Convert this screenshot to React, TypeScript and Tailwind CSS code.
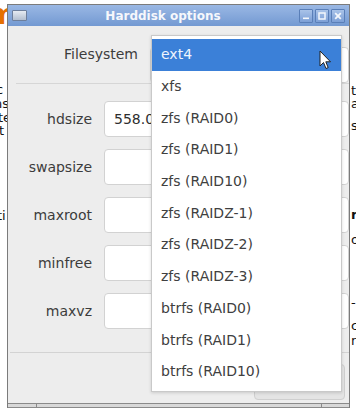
const fsOptions = [
  'ext4',
  'xfs',
  'zfs (RAID0)',
  'zfs (RAID1)',
  'zfs (RAID10)',
  'zfs (RAIDZ-1)',
  'zfs (RAIDZ-2)',
  'zfs (RAIDZ-3)',
  'btrfs (RAID0)',
  'btrfs (RAID1)',
  'btrfs (RAID10)',
]

const fields = [
  { label: 'hdsize', value: '558.0' },
  { label: 'swapsize', value: '' },
  { label: 'maxroot', value: '' },
  { label: 'minfree', value: '' },
  { label: 'maxvz', value: '' },
]

function TitleButton({ kind }: { kind: 'min' | 'max' | 'close' }) {
  return (
    <div className="flex h-[14px] w-[14px] items-center justify-center rounded-[1px] border border-[#5a7fb8] bg-gradient-to-b from-[#a9c3e8] to-[#7c9fd6]">
      <svg width="8" height="8" viewBox="0 0 8 8">
        {kind === 'min' && <rect x="1" y="5.5" width="6" height="1.6" fill="#f4f7fc" />}
        {kind === 'max' && <rect x="1" y="1" width="6" height="6" fill="none" stroke="#f4f7fc" strokeWidth="1.5" />}
        {kind === 'close' && (
          <path d="M1.2 1.2 L6.8 6.8 M6.8 1.2 L1.2 6.8" stroke="#f4f7fc" strokeWidth="1.8" />
        )}
      </svg>
    </div>
  )
}

export default function App() {
  return (
    <div
      className="relative h-[413px] w-[356px] overflow-hidden bg-white text-[#3c3c3c]"
      style={{ fontFamily: '"DejaVu Sans", "Liberation Sans", sans-serif' }}
    >
      <div className="flex h-full">
        {/* page behind, left */}
        <div className="relative h-full w-[7px] shrink-0 overflow-hidden text-[13px] leading-[13px] text-[#111]">
          <span className="absolute left-[-13px] top-[0px] block h-[30px] text-[28px] font-bold leading-[30px] text-[#e57000]">m</span>
          <div className="absolute left-[-4px] top-[83px]">c</div>
          <div className="absolute left-[-6px] top-[97px]">ns</div>
          <div className="absolute left-[-2px] top-[111px]">te</div>
          <div className="absolute left-[-1px] top-[124px]">t</div>
          <div className="absolute left-[-3px] top-[209px]">ti</div>
        </div>

        {/* dialog window */}
        <div className="mt-[4px] flex h-[404px] w-[343px] shrink-0 flex-col border-x border-t border-[#7b7b7b] bg-[#ededed]">
          <div className="relative flex h-[21px] shrink-0 items-center bg-gradient-to-b from-[#9ab8e4] to-[#7399d2] px-[4px]">
            <div className="h-[11px] w-[15px] rounded-[1px] border border-[#6d7f9c] bg-gradient-to-b from-[#e6ebf2] to-[#b3bfd0]" />
            <div className="flex-1 text-center text-[12px] font-bold text-[#f6f8fc]">Harddisk options</div>
            <div className="flex gap-[2px]">
              <TitleButton kind="min" />
              <TitleButton kind="max" />
              <TitleButton kind="close" />
            </div>
          </div>

          <div className="flex h-[57px] shrink-0 items-center">
            <div className="w-[131px] pr-[1px] text-right text-[14px]">Filesystem</div>
            <div className="ml-[11px] h-[36px] flex-1 self-end rounded-[4px] border border-[#cfcfcf] bg-white" />
          </div>
          <div className="ml-[8px] h-px shrink-0 bg-[#d6d6d6]" />

          <div className="flex flex-col gap-[12px] pt-[17px]">
            {fields.map((f) => (
              <div key={f.label} className="flex h-[36px] items-center">
                <div className="w-[84px] text-right text-[14px]">{f.label}</div>
                <div className="ml-[12px] flex h-full flex-1 items-center rounded-[4px] border border-[#d2d2d2] bg-white pl-[9px] text-[14px] text-[#2e2e2e]">
                  {f.value}
                </div>
              </div>
            ))}
          </div>

          <div className="ml-[2px] mt-[23px] h-px shrink-0 bg-[#d3d3d3]" />
          <div className="flex flex-1 items-start justify-end pr-[4px] pt-[11px]">
            <div className="h-[36px] w-[91px] rounded-[4px] border border-[#cfcfcf] bg-[#e4e4e4]" />
          </div>
          <div className="relative h-[5px] shrink-0 border-y border-[#8a8a8a] bg-[#d8d8d8]">
            <div className="absolute left-[28px] top-0 h-full w-px bg-[#8a8a8a]" />
            <div className="absolute left-[313px] top-0 h-full w-px bg-[#8a8a8a]" />
          </div>
        </div>

        {/* page behind, right */}
        <div className="relative flex-1 overflow-hidden text-[13px] leading-[13px] text-[#111]">
          <div className="absolute left-[1px] top-[84px]">th</div>
          <div className="absolute left-[1px] top-[97px]">a</div>
          <div className="absolute left-[1px] top-[119px]">st</div>
          <div className="absolute left-[1px] top-[208px] font-bold">ro</div>
          <div className="absolute left-[1px] top-[233px]">o</div>
          <div className="absolute left-[1px] top-[296px]">-</div>
          <div className="absolute left-[1px] top-[319px]">c</div>
          <div className="absolute left-[1px] top-[334px]">n</div>
        </div>
      </div>

      {/* open combo popup */}
      <div className="absolute left-[151px] top-[35px] w-[191px] border border-[#c9c9c9] bg-white pb-[3px] pt-[3px] shadow-[0_1px_3px_rgba(0,0,0,0.15)]">
        {fsOptions.map((opt, i) => (
          <div
            key={opt}
            className={
              i === 0
                ? 'flex h-[31.7px] items-center bg-[#3b80d8] pl-[9px] text-[14px] text-[#eef4fd]'
                : 'flex h-[31.7px] items-center pl-[9px] text-[14px] text-[#404040]'
            }
          >
            {opt}
          </div>
        ))}
      </div>

      {/* mouse pointer */}
      <svg className="absolute left-[319px] top-[50px]" width="14" height="21" viewBox="0 0 14 21">
        <path d="M1 1 L1 16 L4.5 12.5 L7 18.5 L9.2 17.6 L6.8 11.8 L11.5 11.8 Z" fill="#fff" stroke="#222" strokeWidth="1" strokeLinejoin="round" />
      </svg>
    </div>
  )
}
